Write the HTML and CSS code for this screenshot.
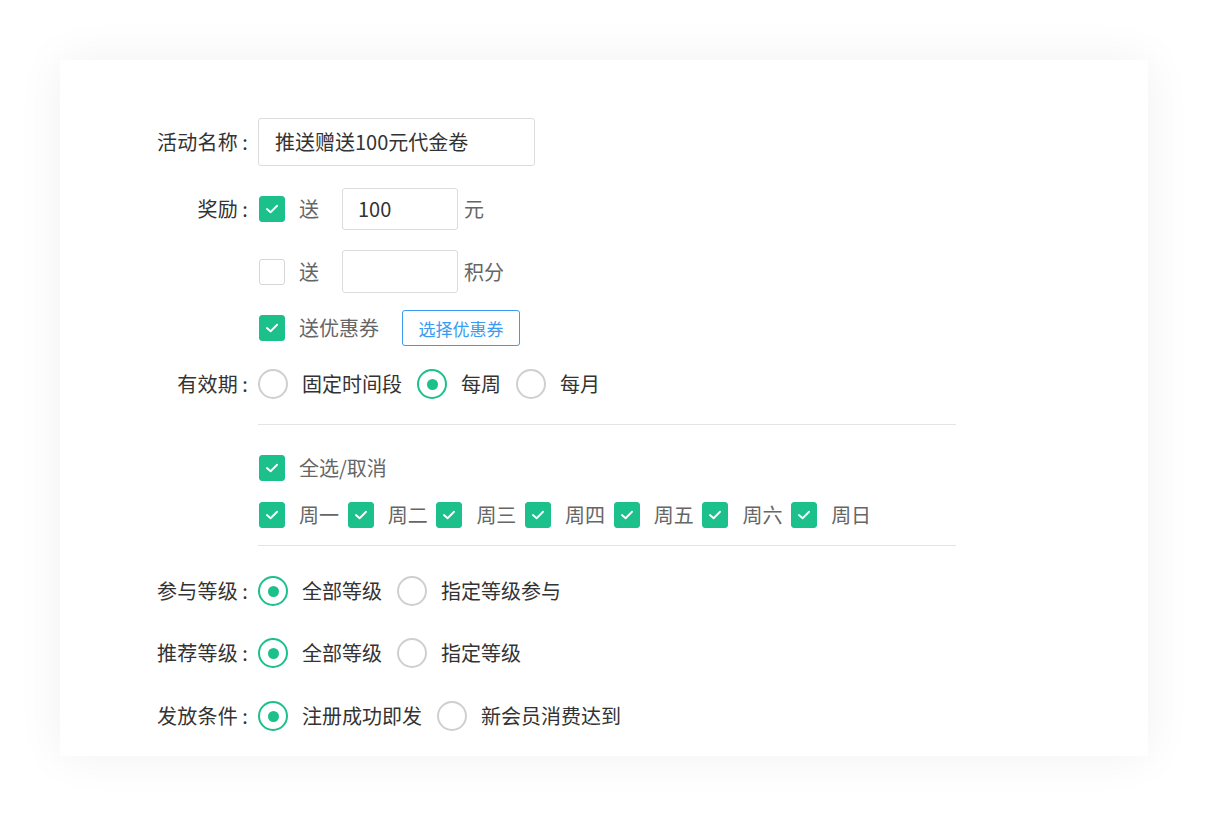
FILE: index.html
```html
<!DOCTYPE html>
<html lang="zh-CN">
<head>
<meta charset="utf-8">
<title>活动设置</title>
<link rel="stylesheet" href="styles.css">
</head>
<body>
<div class="card">
  <div class="row r-name">
    <div class="label">活动名称<span class="colon">:</span></div>
    <div class="input wide">推送赠送100元代金卷</div>
  </div>

  <div class="row r-reward1">
    <div class="label">奖励<span class="colon">:</span></div>
    <span class="cb on"><svg viewBox="0 0 26 26"><polyline points="7.5,13 11.5,16.5 18.5,9.5"/></svg></span>
    <span class="opt gray gap-s">送</span>
    <div class="input small">100</div>
    <span class="unit">元</span>
  </div>

  <div class="row r-reward2">
    <div class="label"></div>
    <span class="cb"></span>
    <span class="opt gray gap-s">送</span>
    <div class="input small"></div>
    <span class="unit">积分</span>
  </div>

  <div class="row r-reward3">
    <div class="label"></div>
    <span class="cb on"><svg viewBox="0 0 26 26"><polyline points="7.5,13 11.5,16.5 18.5,9.5"/></svg></span>
    <span class="opt gray">送优惠券</span>
    <button class="btn">选择优惠券</button>
  </div>

  <div class="row r-valid">
    <div class="label">有效期<span class="colon">:</span></div>
    <span class="rd"></span><span class="opt">固定时间段</span>
    <span class="rd on"></span><span class="opt">每周</span>
    <span class="rd"></span><span class="opt">每月</span>
  </div>

  <div class="divider d1"></div>

  <div class="row r-all">
    <div class="label"></div>
    <span class="cb on"><svg viewBox="0 0 26 26"><polyline points="7.5,13 11.5,16.5 18.5,9.5"/></svg></span>
    <span class="opt gray">全选/取消</span>
  </div>

  <div class="row r-week">
    <div class="label"></div>
    <div class="week">
      <span class="cb on"><svg viewBox="0 0 26 26"><polyline points="7.5,13 11.5,16.5 18.5,9.5"/></svg></span><span class="day">周一</span>
      <span class="cb on"><svg viewBox="0 0 26 26"><polyline points="7.5,13 11.5,16.5 18.5,9.5"/></svg></span><span class="day">周二</span>
      <span class="cb on"><svg viewBox="0 0 26 26"><polyline points="7.5,13 11.5,16.5 18.5,9.5"/></svg></span><span class="day">周三</span>
      <span class="cb on"><svg viewBox="0 0 26 26"><polyline points="7.5,13 11.5,16.5 18.5,9.5"/></svg></span><span class="day">周四</span>
      <span class="cb on"><svg viewBox="0 0 26 26"><polyline points="7.5,13 11.5,16.5 18.5,9.5"/></svg></span><span class="day">周五</span>
      <span class="cb on"><svg viewBox="0 0 26 26"><polyline points="7.5,13 11.5,16.5 18.5,9.5"/></svg></span><span class="day">周六</span>
      <span class="cb on"><svg viewBox="0 0 26 26"><polyline points="7.5,13 11.5,16.5 18.5,9.5"/></svg></span><span class="day">周日</span>
    </div>
  </div>

  <div class="divider d2"></div>

  <div class="row r-level1">
    <div class="label">参与等级<span class="colon">:</span></div>
    <span class="rd on"></span><span class="opt">全部等级</span>
    <span class="rd"></span><span class="opt">指定等级参与</span>
  </div>

  <div class="row r-level2">
    <div class="label">推荐等级<span class="colon">:</span></div>
    <span class="rd on"></span><span class="opt">全部等级</span>
    <span class="rd"></span><span class="opt">指定等级</span>
  </div>

  <div class="row r-cond">
    <div class="label">发放条件<span class="colon">:</span></div>
    <span class="rd on"></span><span class="opt">注册成功即发</span>
    <span class="rd"></span><span class="opt">新会员消费达到</span>
  </div>
</div>
</body>
</html>
```

FILE: styles.css
```css
* { box-sizing: border-box; }

html, body {
  margin: 0;
  padding: 0;
  background: #ffffff;
}

body {
  font-family: "Microsoft YaHei", "Noto Sans CJK SC", "Noto Sans", sans-serif;
  font-size: 20px;
  color: #333333;
}

.card {
  margin: 60px;
  width: 1088px;
  height: 696px;
  background: #ffffff;
  box-shadow: 0 0 45px rgba(0, 0, 0, 0.06);
  padding-top: 58px;
  display: flex;
  flex-direction: column;
}

.row {
  display: flex;
  align-items: center;
  line-height: 1;
}

.label {
  width: 198px;
  padding-right: 10px;
  text-align: right;
  flex: none;
  color: #333333;
  white-space: nowrap;
  letter-spacing: 0.3px;
}

.colon {
  margin-left: 4px;
}

/* vertical rhythm */
.r-name { height: 48px; }
.r-reward1 { height: 42px; margin-top: 22px; }
.r-reward2 { height: 43px; margin-top: 20px; }
.r-reward3 { height: 36px; margin-top: 17px; }
.r-valid { height: 30px; margin-top: 23px; }
.d1 { margin-top: 25px; }
.r-all { height: 26px; margin-top: 30px; }
.r-week { height: 26px; margin-top: 21px; }
.d2 { margin-top: 17px; }
.r-level1 { height: 30px; margin-top: 30px; }
.r-level2 { height: 30px; margin-top: 32px; }
.r-cond { height: 30px; margin-top: 33px; }

.divider {
  margin-left: 198px;
  width: 698px;
  height: 1px;
  background: #e4e4e4;
  flex: none;
}

.input {
  height: 100%;
  border: 1px solid #dcdcdc;
  border-radius: 3px;
  display: flex;
  align-items: center;
  color: #333333;
}

.input.wide {
  width: 277px;
  padding-left: 16px;
}

.input.small {
  width: 116px;
  padding-left: 15px;
  margin-left: 23px;
}

.unit {
  color: #666666;
  margin-left: 6px;
}

/* checkbox */
.cb {
  width: 26px;
  height: 26px;
  flex: none;
  border: 1px solid #d6d6d6;
  border-radius: 3px;
  background: #ffffff;
  display: inline-flex;
  align-items: center;
  justify-content: center;
  margin-left: 1px;
}

.cb.on {
  background: #1cc08b;
  border-color: #1cc08b;
}

.cb svg {
  width: 26px;
  height: 26px;
  fill: none;
  stroke: #ffffff;
  stroke-width: 2;
  stroke-linecap: round;
  stroke-linejoin: round;
}

/* radio */
.rd {
  width: 30px;
  height: 30px;
  flex: none;
  border: 2px solid #cfcfcf;
  border-radius: 50%;
  display: inline-flex;
  align-items: center;
  justify-content: center;
  margin-right: 14px;
}

.rd.on {
  border-color: #1cc08b;
}

.rd.on::after {
  content: "";
  width: 11px;
  height: 11px;
  border-radius: 50%;
  background: #1cc08b;
}

.opt {
  margin-left: 0;
  margin-right: 15px;
  white-space: nowrap;
  color: #333333;
}

.cb + .opt {
  margin-left: 14px;
}

.opt.gray { color: #666666; }
.opt.gap-s { margin-right: 0; }

.btn {
  font-family: inherit;
  font-size: 17px;
  color: #3a9cf0;
  background: #ffffff;
  border: 1px solid #3a9cf0;
  border-radius: 3px;
  height: 36px;
  width: 118px;
  padding: 0;
  margin-left: 8px;
  line-height: 1;
}

.week {
  display: flex;
  align-items: center;
}

.week .cb { margin-left: 0; }
.week .cb:first-child { margin-left: 1px; }

.day {
  color: #666666;
  margin-left: 14px;
  margin-right: 8px;
  width: 40.7px;
  white-space: nowrap;
}
```
